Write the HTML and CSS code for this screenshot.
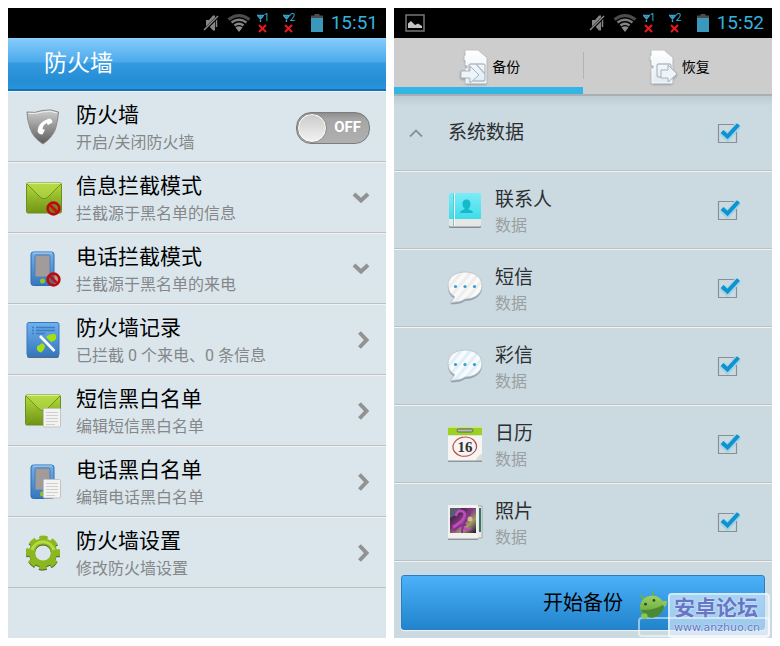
FILE: index.html
```html
<!DOCTYPE html>
<html lang="zh-CN">
<head>
  <meta charset="UTF-8">
  <meta name="viewport" content="width=device-width, initial-scale=1.0">
  <title>防火墙</title>
  <link rel="stylesheet" href="styles.css">
</head>
<body>

<!-- Shared icons -->
<svg class="defs" aria-hidden="true">
  <defs>
    <linearGradient id="gGreen" x1="0" y1="0" x2="0" y2="1">
      <stop offset="0" stop-color="#b4dc3c"/><stop offset="1" stop-color="#6f9416"/>
    </linearGradient>
    <linearGradient id="gBlue" x1="0" y1="0" x2="0" y2="1">
      <stop offset="0" stop-color="#6fb1f0"/><stop offset="1" stop-color="#3577bd"/>
    </linearGradient>
    <linearGradient id="gGray" x1="0" y1="0" x2="0" y2="1">
      <stop offset="0" stop-color="#cfcfcf"/><stop offset="1" stop-color="#5c5c5c"/>
    </linearGradient>
    <linearGradient id="gCard" x1="0" y1="0" x2="0" y2="1">
      <stop offset="0" stop-color="#ffffff"/><stop offset="1" stop-color="#dfecf6"/>
    </linearGradient>
    <linearGradient id="gCyan" x1="0" y1="0" x2="0" y2="1">
      <stop offset="0" stop-color="#7cecf7"/><stop offset="1" stop-color="#3edcea"/>
    </linearGradient>
    <linearGradient id="gDroid" x1="0" y1="0" x2="0" y2="1">
      <stop offset="0" stop-color="#a0d060"/><stop offset="1" stop-color="#58a03a"/>
    </linearGradient>
    <linearGradient id="gPhoto" x1="0" y1="0" x2="1" y2="1">
      <stop offset="0" stop-color="#1c0b22"/><stop offset=".45" stop-color="#7a3c78"/>
      <stop offset=".7" stop-color="#a59a68"/><stop offset="1" stop-color="#1d0f2c"/>
    </linearGradient>
    <pattern id="pGray" width="7" height="7" patternUnits="userSpaceOnUse" patternTransform="rotate(40)">
      <rect width="7" height="7" fill="#f9f9f9"/><rect width="3" height="7" fill="#ededed"/>
    </pattern>
    <pattern id="pBlue" width="7" height="7" patternUnits="userSpaceOnUse" patternTransform="rotate(40)">
      <rect width="7" height="7" fill="#f8fafb"/><rect width="3" height="7" fill="#def0fa"/>
    </pattern>
  </defs>

  <symbol id="mute" viewBox="0 0 18 20">
    <path d="M3 7h3l4-4.500h2v15h-2L6 13H3z" fill="#858585"/>
    <path d="M13.500 6v8" stroke="#858585" stroke-width="1.500"/>
    <path d="M1 17.500 15.500 3" stroke="#000" stroke-width="3"/>
    <path d="M1 17 15 3" stroke="#8a8a8a" stroke-width="1.400"/>
  </symbol>
  <symbol id="wifi" viewBox="0 0 24 20">
    <path d="M1.500 6.500Q12-1.500 22.500 6.500" fill="none" stroke="#4c4c4c" stroke-width="3"/>
    <path d="M4.500 9.500Q12 4 19.500 9.500" fill="none" stroke="#7d7d7d" stroke-width="2.500"/>
    <path d="M7.500 12.500Q12 9 16.500 12.500" fill="none" stroke="#868686" stroke-width="2.500"/>
    <path d="M8.500 14.500Q12 12 15.500 14.500L12 19z" fill="#8c8c8c"/>
  </symbol>
  <symbol id="antenna" viewBox="0 0 20 20">
    <path d="M0 2.500h7M3.500 2v7M1 3l2.500 3L6 3" fill="none" stroke="#3aa0c4" stroke-width="1.400"/>
    <path d="m2 12 7 7M9 12l-7 7" stroke="#e8181c" stroke-width="2"/>
  </symbol>
  <symbol id="battery" viewBox="0 0 16 20">
    <path d="M5.500 1h5v1.500H14V6H2V2.500h3.500z" fill="#4d4d4d"/>
    <path d="M2 5h12v14H2z" fill="#3a98bd"/>
  </symbol>
  <symbol id="ban" viewBox="0 0 14 14">
    <circle cx="7" cy="7" r="5.500" fill="#8c4a1c" fill-opacity=".45" stroke="#b80a0f" stroke-width="2.400"/>
    <path d="m3.500 3.500 7 7" stroke="#c40e12" stroke-width="2.400"/>
  </symbol>
  <symbol id="sheet" viewBox="0 0 18 20">
    <rect x=".500" y=".500" width="17" height="18.500" rx="1" fill="#f3f3f1" stroke="#c3c3c3"/>
    <path d="M3 4.500h12M3 7.500h12M3 10.500h12M3 13.500h12M3 16.500h9" stroke="#cfcfcf"/>
  </symbol>
  <symbol id="mail" viewBox="0 0 36 32">
    <rect x=".500" y="1" width="35" height="30" rx="1.500" fill="url(#gGreen)" stroke="#6d8f1d"/>
    <path d="M1.500 30 13 16M34.500 30 23 16" stroke="#86aa28" fill="none"/>
    <path d="M1 2l13 13q4 3.500 8 0L35 2" fill="#b5db4b" fill-opacity=".6" stroke="#6e911f"/>
    <path d="M1.500 1.500h33" stroke="#d8f28a"/>
  </symbol>
  <symbol id="phone" viewBox="0 0 26 36">
    <rect x="1" y="1" width="23" height="33.500" rx="2.500" fill="url(#gBlue)" stroke="#2d6cae"/>
    <path d="M3 2h19" stroke="#a7d2fa"/>
    <rect x="5" y="4" width="15" height="22" rx="1.500" fill="#a19b9c" stroke="#557fae"/>
    <circle cx="12.500" cy="30" r="2.500" fill="#92c51f"/>
  </symbol>
  <symbol id="down" viewBox="0 0 18 18">
    <path d="m2 5 7 6.500L16 5" fill="none" stroke="#929292" stroke-width="4"/>
  </symbol>
  <symbol id="right" viewBox="0 0 18 18">
    <path d="m7.500 1.500 7 7.500-7 7.500" fill="none" stroke="#929292" stroke-width="4"/>
  </symbol>
  <symbol id="bubble" viewBox="0 0 40 40">
    <path d="M20 5C30 5 37 10.500 37 18.500S30 32 20 32Q14 36 5 35q4-2 4.500-5.500Q3 26 3 18.500C3 10.500 10 5 20 5z" style="fill: #788b96" fill-opacity=".7" transform="translate(0 1)"/>
    <path d="M20 4C30 4 37 9.500 37 17.500S30 31 20 31Q14 35 5 34q4-2 4.500-5.500Q3 25 3 17.500C3 9.500 10 4 20 4z" stroke="#b9c0c4" stroke-width=".800"/>
    <g fill="#3b9bd0"><circle cx="10.500" cy="18.500" r="1.600"/><circle cx="20" cy="18.500" r="1.600"/><circle cx="29.500" cy="18.500" r="1.600"/></g>
  </symbol>
  <symbol id="tick" viewBox="0 0 24 24">
    <path d="M17 3.500H1.500v18h18V11" fill="none" stroke="#8a8f91" stroke-width="1.200"/>
    <path d="m5 11 5.500 5.500L21.500 4" fill="none" stroke="#5fc4ea" stroke-opacity=".35" stroke-width="7"/>
    <path d="m5 10.500 5.500 5L21.500 3.500" fill="none" stroke="#0d93cf" stroke-width="4"/>
  </symbol>
  <symbol id="sim" viewBox="0 0 24 34">
    <path d="M2 1h12l8 7v25H2V19h2v-4H2V10H1V6h1z" fill="url(#gCard)" stroke="#fff"/>
  </symbol>
</svg>

<main class="screens">

  <section class="screen firewall">
    <div class="status">
      <svg class="s-mute"><use href="#mute"/></svg>
      <svg class="s-wifi"><use href="#wifi"/></svg>
      <span class="sim"><svg><use href="#antenna"/></svg><b>1</b></span>
      <span class="sim"><svg><use href="#antenna"/></svg><b>2</b></span>
      <svg class="s-battery"><use href="#battery"/></svg>
      <time>15:51</time>
    </div>
    <h1 class="title-bar">防火墙</h1>

    <label class="row">
      <svg class="icon" viewBox="0 0 40 40">
        <path d="M3 5q8 1.500 15-1.500 9-2 16.500 1.500-.500 8-3 17Q28 31 19 37 9 31 6 21 3 12 3 5z" fill="url(#gGray)" stroke="#8b8b8b"/>
        <path d="M4.500 6.500Q12 7 18.500 5q8-2 14.500 1" fill="none" stroke="#f0f0f0"/>
        <path d="M25 11.500q3.500.500 3.500 4l-4.500 2.500-1.500-2q-3.500 2-4 6l2.500.800-2.500 4.700q-4 0-5-3.500Q14 15.500 25 11.500z" fill="#fff"/>
      </svg>
      <span class="text"><span class="name">防火墙</span><span class="note">开启/关闭防火墙</span></span>
      <span class="switch"><input type="checkbox"><span>OFF</span></span>
    </label>

    <button class="row" type="button">
      <svg class="icon" viewBox="0 0 40 40">
        <use href="#mail" x="2" y="4" width="36" height="32"/>
        <use href="#ban" x="22" y="23" width="15" height="15"/>
      </svg>
      <span class="text"><span class="name">信息拦截模式</span><span class="note">拦截源于黑名单的信息</span></span>
      <svg class="arrow"><use href="#down"/></svg>
    </button>

    <button class="row" type="button">
      <svg class="icon" viewBox="0 0 40 40">
        <use href="#phone" x="6" y="2" width="26" height="36"/>
        <use href="#ban" x="22" y="23" width="15" height="15"/>
      </svg>
      <span class="text"><span class="name">电话拦截模式</span><span class="note">拦截源于黑名单的来电</span></span>
      <svg class="arrow"><use href="#down"/></svg>
    </button>

    <a class="row" href="#log">
      <svg class="icon" viewBox="0 0 40 40">
        <rect x="3" y="4" width="32" height="34" rx="2" fill="#4d6b8b"/>
        <rect x="3" y="2.500" width="32" height="33.500" rx="2" fill="url(#gBlue)" stroke="#3a78b8"/>
        <path d="M8 7.500h2M12 7.500h19M8 10.500h2M12 10.500h19M8 13.500h2M12 13.500h9" stroke="#3c7dc2" stroke-width="1.500"/>
        <path d="M22 17q3-3.500 9-3 2 2 1 5-2 3-5 3zM18 23l3 2.500q0 4-4 7-5-1-4-6 2-1 5-3.500z" fill="#a4e010"/>
        <path d="m16 16 14.500 15" stroke="#fff" stroke-width="2.600"/>
      </svg>
      <span class="text"><span class="name">防火墙记录</span><span class="note">已拦截 0 个来电、0 条信息</span></span>
      <svg class="arrow"><use href="#right"/></svg>
    </a>

    <a class="row" href="#sms-list">
      <svg class="icon" viewBox="0 0 40 40">
        <use href="#mail" x="1" y="3" width="36" height="32"/>
        <use href="#sheet" x="19" y="17" width="18" height="20"/>
      </svg>
      <span class="text"><span class="name">短信黑白名单</span><span class="note">编辑短信黑白名单</span></span>
      <svg class="arrow"><use href="#right"/></svg>
    </a>

    <a class="row" href="#call-list">
      <svg class="icon" viewBox="0 0 40 40">
        <use href="#phone" x="6" y="2" width="26" height="36"/>
        <use href="#sheet" x="19" y="17" width="18" height="20"/>
      </svg>
      <span class="text"><span class="name">电话黑白名单</span><span class="note">编辑电话黑白名单</span></span>
      <svg class="arrow"><use href="#right"/></svg>
    </a>

    <a class="row" href="#settings">
      <svg class="icon" viewBox="0 0 40 40">
        <g fill="none" stroke="#4c5f26">
          <circle cx="19" cy="20.500" r="11" stroke-width="6"/>
          <circle cx="19" cy="20.500" r="14.500" stroke-width="5" stroke-dasharray="7.200 4.190" stroke-dashoffset="3.600"/>
        </g>
        <g fill="none" stroke="#8cb81f">
          <circle cx="19" cy="19.500" r="11" stroke-width="6"/>
          <circle cx="19" cy="19.500" r="14.500" stroke-width="5" stroke-dasharray="7.200 4.190" stroke-dashoffset="3.600"/>
        </g>
        <path d="M8 17a11.500 11.500 0 0 1 22 0" fill="none" stroke="#b2dc45" stroke-width="3"/>
      </svg>
      <span class="text"><span class="name">防火墙设置</span><span class="note">修改防火墙设置</span></span>
      <svg class="arrow"><use href="#right"/></svg>
    </a>
  </section>

  <section class="screen backup">
    <div class="status">
      <svg class="s-picture" viewBox="0 0 20 18">
        <rect x="1" y="1" width="18" height="16" fill="none" stroke="#777" stroke-width="1.500"/>
        <path d="M3 14V9.500L6 7l4 4 3-1.500 4 2.500v2z" fill="#c4c4c4"/>
      </svg>
      <svg class="s-mute"><use href="#mute"/></svg>
      <svg class="s-wifi"><use href="#wifi"/></svg>
      <span class="sim"><svg><use href="#antenna"/></svg><b>1</b></span>
      <span class="sim"><svg><use href="#antenna"/></svg><b>2</b></span>
      <svg class="s-battery"><use href="#battery"/></svg>
      <time>15:52</time>
    </div>

    <nav class="tabs">
      <button class="tab active" type="button">
        <svg viewBox="0 0 28 34">
          <use href="#sim" x="4" y="0" width="24" height="34"/>
          <path d="M9 23v-7q0-2 2-2h12q2 0 2 2v13q0 2-2 2H13M16 14l9 10" fill="none" stroke="#b4bdc4" stroke-width="1.300"/>
          <path d="M1 21h9v-5l9 9-9 8v-5H1z" fill="#eef5fa" stroke="#aab3ba"/>
        </svg>
        备份
      </button>
      <span class="divider"></span>
      <button class="tab" type="button">
        <svg viewBox="0 0 28 34">
          <use href="#sim" x="0" y="0" width="24" height="34"/>
          <path d="M21 18v-2q0-2-2-2H9q-2 0-2 2v9q0 2 2 2h2" fill="none" stroke="#b4bdc4" stroke-width="1.300"/>
          <path d="M11 20h7v-5l9 9-9 8v-4h-7z" fill="#eef5fa" stroke="#aab3ba"/>
        </svg>
        恢复
      </button>
    </nav>

    <div class="group">
      <button class="fold" type="button">
        <svg viewBox="0 0 16 10"><path d="m2 8.500 6-6 6 6" fill="none" stroke="#87939a" stroke-width="1.800"/></svg>
        系统数据
      </button>
      <span class="check"><input type="checkbox" aria-label="系统数据" checked><svg><use href="#tick"/></svg></span>
    </div>

    <label class="row">
      <svg class="icon" viewBox="0 0 40 40">
        <rect x="4" y="4" width="32" height="34" rx="1.500" fill="#7e8f96"/>
        <rect x="4" y="3" width="32" height="33.500" rx="1.500" fill="#e6e6e4"/>
        <path d="M5 3h30q1 0 1 1v25H4V4q0-1 1-1z" fill="url(#gCyan)"/>
        <path d="M9.500 3v33" stroke="#f2ffff" stroke-width="1"/><path d="M8.500 3v33" stroke="#59bfc9" stroke-width=".800"/>
        <path d="M21.500 9.500q4 0 4 4.500 0 3-2 4.500v1q4 .500 4.500 3.500H15q.500-3 4.500-3.500v-1q-2-1.500-2-4.500 0-4.500 4-4.500z" fill="#14b9ca"/>
      </svg>
      <span class="text"><span class="name">联系人</span><span class="note">数据</span></span>
      <span class="check"><input type="checkbox" checked><svg><use href="#tick"/></svg></span>
    </label>

    <label class="row">
      <svg class="icon bubble-gray"><use href="#bubble"/></svg>
      <span class="text"><span class="name">短信</span><span class="note">数据</span></span>
      <span class="check"><input type="checkbox" checked><svg><use href="#tick"/></svg></span>
    </label>

    <label class="row">
      <svg class="icon bubble-blue"><use href="#bubble"/></svg>
      <span class="text"><span class="name">彩信</span><span class="note">数据</span></span>
      <span class="check"><input type="checkbox" checked><svg><use href="#tick"/></svg></span>
    </label>

    <label class="row">
      <svg class="icon" viewBox="0 0 40 40">
        <path d="M3 5h34v33H3z" fill="#8b979d"/>
        <path d="M3 3h34v27l-6 6.500H3z" fill="#f6f5f2"/>
        <path d="M31 36.500q1-5 6-6.500v6.500z" fill="#dcdcd8"/>
        <path d="M3 3h34v8H3z" fill="#9bd11f"/>
        <path d="M3 3.500h34" stroke="#c4ec62"/>
        <path d="M3 11.500h34" stroke="#dedede"/>
        <rect x="12" y="5" width="16" height="3" rx="1.500" fill="#bbb" stroke="#5f6b48"/>
        <path d="M12 15.500q9-5 16 0 5.500 5 2.500 11-5 7-14.500 5.500-9-3-8-10.500Q10 15 18 13" fill="none" stroke="#c44547" stroke-width="1.200"/>
        <text x="20" y="28" text-anchor="middle">16</text>
      </svg>
      <span class="text"><span class="name">日历</span><span class="note">数据</span></span>
      <span class="check"><input type="checkbox" checked><svg><use href="#tick"/></svg></span>
    </label>

    <label class="row">
      <svg class="icon" viewBox="0 0 40 40">
        <path d="M8 4h29v32H8z" fill="#eceae6" stroke="#9a9a98" stroke-width=".800"/>
        <path d="M34 6h2v24h-2z" fill="#2d7a72"/>
        <path d="M3 4h30v34H3z" fill="#8e9498"/>
        <path d="M3 3h30v33.500H3z" fill="#f3f1ed"/>
        <path d="M5 6h26v25H5z" fill="url(#gPhoto)"/>
        <path d="M5 6h11q-2 6-11 10z" fill="#54606c"/>
        <path d="M11 14q1-6 6-5 5 2 1 8-3 4-10 8 7-3 11 1 3 3 7 0" fill="none" stroke="#c04cc0" stroke-width="2.600"/>
        <path d="M17 31q0-8 5-14 4-6 3-11M9 29q5-7 12-6" fill="none" stroke="#8c2c92" stroke-width="2"/>
        <circle cx="25" cy="17" r="2.500" fill="#d8d59c" fill-opacity=".8"/>
      </svg>
      <span class="text"><span class="name">照片</span><span class="note">数据</span></span>
      <span class="check"><input type="checkbox" checked><svg><use href="#tick"/></svg></span>
    </label>

    <div class="footer">
      <button class="start" type="button">开始备份</button>
      <div class="watermark">
        <svg viewBox="0 0 32 34">
          <path d="m7 9-4-4M16 6V1" stroke="#6fae45" stroke-width="2" stroke-linecap="round"/>
          <path d="M2 16Q4 6 14 5q10-1 14 9-3 11-12 14-9 1-12-4-2-3-2-8z" fill="url(#gDroid)"/>
          <path d="M3 20q14 1 25-6 0 10-10 14-10 2-15-8z" fill="#4b8a35"/>
          <path d="M3 26q3-4 7-1 1 5-3 5-4-1-4-4zM25 12q3-3 6-1 0 4-3 6z" fill="#8cc653"/>
          <circle cx="8" cy="14" r="1.500" fill="#25521f"/><circle cx="17" cy="10" r="1.500" fill="#25521f"/>
        </svg>
        <span class="mark"><strong>安卓论坛</strong><small>www.anzhuo.cn</small></span>
      </div>
    </div>
  </section>

</main>

</body>
</html>
```

FILE: styles.css
```css
* {
  box-sizing: border-box;
}

body {
  margin: 0;
  background: #fff;
  font-family: Roboto, "Noto Sans CJK SC", sans-serif;
  color: #000;
}

button {
  margin: 0;
  border: 0;
  padding: 0;
  background: none;
  font: inherit;
  color: inherit;
  cursor: pointer;
}

svg {
  display: block;
  flex: none;
}

.defs {
  position: absolute;
  width: 0;
  height: 0;
}

.screens {
  display: grid;
  grid-template-columns: 1fr 1fr;
  gap: 8px;
  min-height: 100vh;
  padding: 8px;
}

.screen {
  display: flex;
  flex-direction: column;
}

.firewall {
  background: #dae6ec;
}

.backup {
  background: #cbdae1;
}

/* Status bar */
.status {
  display: flex;
  align-items: center;
  justify-content: flex-end;
  gap: 6px;
  height: 30px;
  padding: 0 8px 0 11px;
  background: #000;
  color: #35b1de;
}

.status time {
  font-size: 19px;
  line-height: 30px;
}

.s-picture {
  width: 20px;
  height: 18px;
  margin-right: auto;
}

.s-mute {
  width: 18px;
  height: 20px;
}

.s-wifi {
  width: 24px;
  height: 20px;
}

.s-battery {
  width: 16px;
  height: 20px;
}

.sim {
  display: grid;
  width: 20px;
  height: 20px;
}

.sim svg,
.sim b {
  grid-area: 1 / 1;
}

.sim svg {
  width: 20px;
  height: 20px;
}

.sim b {
  padding-left: 7px;
  font-size: 10px;
  font-weight: 400;
  line-height: 10px;
}

/* Firewall title */
.title-bar {
  margin: 0;
  padding: 0 36px;
  border-top: 1px solid #8fd0fb;
  border-bottom: 2px solid #0f73ba;
  background: linear-gradient(#83cbfb, #4ba9ea 46%, #349ae0 48%, #248dd4 85%, #2b92d9);
  color: #fff;
  font-size: 23px;
  font-weight: 400;
  line-height: 50px;
}

/* List rows */
.row {
  display: flex;
  align-items: center;
  border-top: 1px solid #f0f3f4;
  border-bottom: 1px solid #bfc0c1;
  color: inherit;
  text-align: left;
  text-decoration: none;
  cursor: pointer;
}

.icon {
  width: 40px;
  height: 40px;
}

.text {
  display: flex;
  flex: 1;
  flex-direction: column;
  padding-top: 4px;
}

.firewall .row {
  gap: 12px;
  padding: 5px 16px;
}

.firewall .name {
  font-size: 21px;
  line-height: 28px;
}

.firewall .note {
  color: #858789;
  font-size: 16px;
  line-height: 27px;
}

.backup .row {
  gap: 10px;
  padding: 10px 31px 10px 51px;
}

.backup .name {
  color: #2c2f31;
  font-size: 19px;
  line-height: 27px;
}

.backup .note {
  color: #9a9fa1;
  font-size: 16px;
  line-height: 25px;
}

.arrow {
  width: 18px;
  height: 18px;
}

.bubble-gray {
  fill: url(#pGray);
}

.bubble-blue {
  fill: url(#pBlue);
}

.icon text {
  fill: #333;
  font-family: "Liberation Serif", serif;
  font-size: 15px;
  font-weight: 700;
}

/* On/off switch */
.switch {
  display: grid;
  width: 74px;
  height: 30px;
}

.switch input,
.switch span {
  grid-area: 1 / 1;
}

.switch input {
  appearance: none;
  display: flex;
  margin: 0;
  border: 1px solid #7c7c7c;
  border-radius: 15px;
  background: linear-gradient(#8d8d8d, #a5a5a5 20%, #b0b0b0);
  cursor: pointer;
}

.switch input::before {
  content: "";
  width: 28px;
  height: 28px;
  border: 1px solid #8a8a8a;
  border-radius: 50%;
  background: linear-gradient(#cacaca, #f3f3f3);
  box-shadow: inset 0 0 0 1px #fff;
}

.switch span {
  padding-right: 9px;
  color: #fff;
  font-size: 15px;
  font-weight: 700;
  line-height: 30px;
  text-align: right;
  pointer-events: none;
}

/* Backup tabs */
.tabs {
  display: flex;
  border-bottom: 2px solid #a9b0b4;
  background: #cdcdcd;
}

.tab {
  display: flex;
  flex: 1;
  align-items: center;
  justify-content: center;
  gap: 4px;
  padding: 12px 0 3px 4px;
  border-bottom: 7px solid transparent;
  font-size: 14px;
  line-height: 34px;
}

.tab svg {
  width: 28px;
  height: 34px;
  filter: drop-shadow(0 1px 1px #8a9299);
}

.tab.active {
  border-bottom-color: #33b5e5;
}

.divider {
  width: 1px;
  margin: 14px 0 15px;
  background: #b3b3b3;
}

/* Group header */
.group {
  display: flex;
  align-items: center;
  padding-right: 31px;
  border-bottom: 1px solid #bfc0c1;
  background: linear-gradient(#bccad1, #cbdae1 10px);
}

.fold {
  display: flex;
  flex: 1;
  align-items: center;
  gap: 24px;
  padding: 24px 0;
  padding-left: 14px;
  color: #2c2f31;
  font-size: 19px;
  line-height: 26px;
}

.fold svg {
  width: 16px;
  height: 10px;
}

/* Tick boxes */
.check {
  display: grid;
  width: 24px;
  height: 24px;
}

.check input,
.check svg {
  grid-area: 1 / 1;
  width: 24px;
  height: 24px;
  margin: 0;
}

.check input {
  appearance: none;
  cursor: pointer;
}

.check svg {
  pointer-events: none;
}

/* Footer */
.footer {
  position: relative;
  display: flex;
  flex: 1;
  padding: 13px 7px 8px;
  border-top: 1px solid #f0f3f4;
}

.start {
  flex: 1;
  border: 1px solid #2a7fc4;
  border-radius: 3px;
  background: linear-gradient(#4cb1f8, #2184cd);
  box-shadow: 0 1px 1px #eef4f7;
  font-size: 20px;
  line-height: 28px;
}

.watermark {
  position: absolute;
  right: 2px;
  bottom: 0;
  display: flex;
}

.watermark::before {
  content: "";
  position: absolute;
  inset: 26px 0 1px;
  border: 2px solid rgba(255, 255, 255, .5);
  border-radius: 4px;
}

.watermark svg {
  position: relative;
  width: 30px;
  height: 32px;
}

.mark {
  display: flex;
  flex-direction: column;
  margin-top: 2px;
  padding: 0 8px 2px 4px;
  border: 2px solid rgba(255, 255, 255, .5);
  border-radius: 4px;
  background: rgba(225, 238, 250, .65);
  color: #6677c8;
  text-shadow: 0 0 2px #fff;
}

.mark strong {
  font-size: 21px;
  line-height: 27px;
}

.mark small {
  font-family: "DejaVu Sans", sans-serif;
  font-size: 11px;
  line-height: 12px;
}
```
